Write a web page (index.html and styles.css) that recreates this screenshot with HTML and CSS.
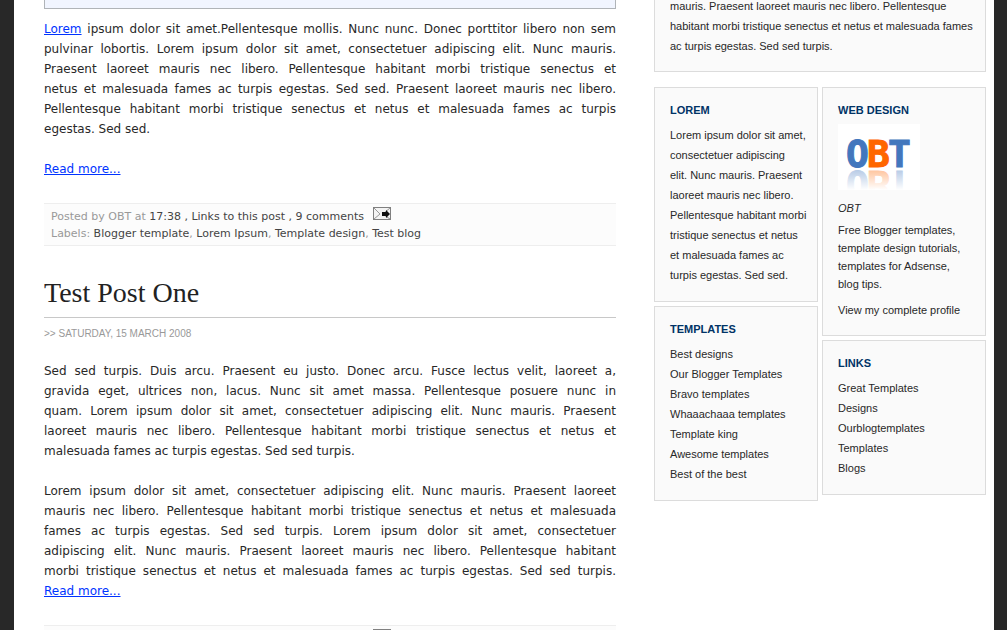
FILE: index.html
```html
<!DOCTYPE html>
<html lang="en">
<head>
    <title>Test blog</title>
    <meta http-equiv="content-type" content="text/html; charset=UTF-8">
    <meta name="viewport" content="width=device-width, initial-scale=1">
    <link rel="stylesheet" href="styles.css">
</head>
<body>
    <!-- envelope icon shared by the post footers -->
    <svg class="defs" width="0" height="0">
        <symbol id="mail" viewBox="0 0 18 13">
            <rect x="0.5" y="0.5" width="17" height="12" fill="#f4f4f4" stroke="#808080" />
            <path d="M1 1l6 6-6 5M17 1l-6 5M11 8l6 4" fill="none" stroke="#999" />
            <path d="M9 5h4V3l4 4-4 4V9H9z" fill="#111" />
        </symbol>
    </svg>

    <div id="outer-wrapper">
        <div id="main">
            <div class="post">
                <div class="notice"></div>
                <div class="post-body">
                    <p>
                        <a href="#">Lorem</a> ipsum dolor sit amet.Pellentesque mollis. Nunc nunc. Donec porttitor libero non sem<br>
                        pulvinar lobortis. Lorem ipsum dolor sit amet, consectetuer adipiscing elit. Nunc mauris.<br>
                        Praesent laoreet mauris nec libero. Pellentesque habitant morbi tristique senectus et<br>
                        netus et malesuada fames ac turpis egestas. Sed sed. Praesent laoreet mauris nec libero.<br>
                        Pellentesque habitant morbi tristique senectus et netus et malesuada fames ac turpis
                        <span class="last">egestas. Sed sed.</span>
                    </p>
                    <p><span class="last"><a href="#">Read more...</a></span></p>
                </div>
                <div class="post-footer">
                    <div>Posted by OBT at <a href="#">17:38</a> <a href="#">, Links to this post</a> <a href="#">, 9 comments</a> <a class="mail" href="#" aria-label="Email Post"><svg width="18" height="13"><use href="#mail" /></svg></a></div>
                    <div>Labels: <a href="#">Blogger template</a>, <a href="#">Lorem Ipsum</a>, <a href="#">Template design</a>, <a href="#">Test blog</a></div>
                </div>
            </div>

            <div class="post">
                <h3 class="post-title">Test Post One</h3>
                <h2 class="date-header">&gt;&gt; Saturday, 15 March 2008</h2>
                <div class="post-body">
                    <p>
                        Sed sed turpis. Duis arcu. Praesent eu justo. Donec arcu. Fusce lectus velit, laoreet a,<br>
                        gravida eget, ultrices non, lacus. Nunc sit amet massa. Pellentesque posuere nunc in<br>
                        quam. Lorem ipsum dolor sit amet, consectetuer adipiscing elit. Nunc mauris. Praesent<br>
                        laoreet mauris nec libero. Pellentesque habitant morbi tristique senectus et netus et
                        <span class="last">malesuada fames ac turpis egestas. Sed sed turpis.</span>
                    </p>
                    <p>
                        Lorem ipsum dolor sit amet, consectetuer adipiscing elit. Nunc mauris. Praesent laoreet<br>
                        mauris nec libero. Pellentesque habitant morbi tristique senectus et netus et malesuada<br>
                        fames ac turpis egestas. Sed sed turpis. Lorem ipsum dolor sit amet, consectetuer<br>
                        adipiscing elit. Nunc mauris. Praesent laoreet mauris nec libero. Pellentesque habitant<br>
                        morbi tristique senectus et netus et malesuada fames ac turpis egestas. Sed sed turpis.
                        <span class="last"><a href="#">Read more...</a></span>
                    </p>
                </div>
                <div class="post-footer">
                    <div>Posted by OBT at <a href="#">17:38</a> <a href="#">, Links to this post</a> <a href="#">, 9 comments</a> <a class="mail" href="#" aria-label="Email Post"><svg width="18" height="13"><use href="#mail" /></svg></a></div>
                </div>
            </div>
        </div>

        <div id="sidebar">
            <div class="widget top">
                <p>mauris. Praesent laoreet mauris nec libero. Pellentesque<br>habitant morbi tristique senectus et netus et malesuada fames<br>ac turpis egestas. Sed sed turpis.</p>
            </div>
            <div class="columns">
                <div class="column">
                    <div class="widget">
                        <h2>Lorem</h2>
                        <p>
                            Lorem ipsum dolor sit amet,<br>
                            consectetuer adipiscing<br>
                            elit. Nunc mauris. Praesent<br>
                            laoreet mauris nec libero.<br>
                            Pellentesque habitant morbi<br>
                            tristique senectus et netus<br>
                            et malesuada fames ac<br>
                            turpis egestas. Sed sed.
                        </p>
                    </div>
                    <div class="widget">
                        <h2>Templates</h2>
                        <ul>
                            <li><a href="#">Best designs</a></li>
                            <li><a href="#">Our Blogger Templates</a></li>
                            <li><a href="#">Bravo templates</a></li>
                            <li><a href="#">Whaaachaaa templates</a></li>
                            <li><a href="#">Template king</a></li>
                            <li><a href="#">Awesome templates</a></li>
                            <li><a href="#">Best of the best</a></li>
                        </ul>
                    </div>
                </div>
                <div class="column">
                    <div class="widget profile">
                        <h2>Web design</h2>
                        <svg class="logo" width="82" height="66" viewBox="0 0 82 66">
                            <defs>
                                <linearGradient id="fade" x1="0" y1="0" x2="0" y2="1">
                                    <stop offset="0" stop-color="#fff" stop-opacity="0.6" />
                                    <stop offset="1" stop-color="#fff" />
                                </linearGradient>
                                <g id="obt">
                                    <text class="blue" x="8" y="43">O</text>
                                    <text class="blue" x="50" y="43">T</text>
                                    <text class="orange" x="29" y="43">B</text>
                                </g>
                            </defs>
                            <rect width="82" height="66" fill="#fff" />
                            <use href="#obt" />
                            <use href="#obt" transform="translate(0 90) scale(1 -1)" />
                            <rect y="45" width="82" height="21" fill="url(#fade)" />
                        </svg>
                        <div class="profile-name">OBT</div>
                        <p>
                            Free Blogger templates,<br>
                            template design tutorials,<br>
                            templates for Adsense,<br>
                            blog tips.
                        </p>
                        <a href="#">View my complete profile</a>
                    </div>
                    <div class="widget">
                        <h2>Links</h2>
                        <ul>
                            <li><a href="#">Great Templates</a></li>
                            <li><a href="#">Designs</a></li>
                            <li><a href="#">Ourblogtemplates</a></li>
                            <li><a href="#">Templates</a></li>
                            <li><a href="#">Blogs</a></li>
                        </ul>
                    </div>
                </div>
            </div>
        </div>
    </div>
</body>
</html>
```
FILE: styles.css
```css
html {
    height: 100%;
}

body {
    margin: 0;
    height: 100%;
    overflow: hidden;
    background: #282828;
    color: #282828;
    font: 12px/20px Verdana, 'DejaVu Sans', sans-serif;
}

.defs {
    position: absolute;
}

h2, h3, p, ul {
    margin: 0;
    padding: 0;
}

#outer-wrapper {
    display: flex;
    gap: 38px;
    min-height: 100%;
    box-sizing: border-box;
    margin: 0 13px 0 14px;
    padding: 0 8px 0 30px;
    background: #fff;
}

/* posts */
#main {
    flex: 1;
    min-width: 0;
}

.notice {
    height: 8px;
    margin-bottom: 10px;
    border: 1px solid #b0b4b8;
    border-top: none;
    background: #f1f5ff;
}

.post-body {
    text-align: justify;
    text-align-last: justify;
}

    .post-body p {
        margin-bottom: 20px;
    }

    .post-body a {
        color: #0033ff;
    }

    .post-body .last {
        display: block;
        text-align-last: left;
    }

.post-footer {
    margin: 24px 0 31px;
    padding: 3px 7px;
    border-top: 1px solid #eee;
    border-bottom: 1px solid #eee;
    background: #fcfcfc;
    color: #999;
    font-size: 11px;
    line-height: 17px;
}

    .post-footer a {
        color: #444;
        text-decoration: none;
    }

    .post-footer .mail {
        margin-left: 5px;
    }

    .post-footer svg {
        display: inline-block;
        vertical-align: baseline;
    }

.post-title {
    padding-bottom: 8px;
    border-bottom: 1px solid #c8c8c8;
    color: #222;
    font: 28px/32px Georgia, 'Liberation Serif', serif;
}

.date-header {
    margin: 6px 0 17px;
    color: #999;
    font: 10px/20px Arial, 'Liberation Sans', sans-serif;
    text-transform: uppercase;
}

/* sidebar */
#sidebar {
    width: 332px;
    font: 11px/20px Arial, 'Liberation Sans', sans-serif;
}

.columns {
    display: flex;
    gap: 4px;
}

.column {
    flex: 1;
    min-width: 0;
}

.widget {
    margin-bottom: 4px;
    padding: 12px 10px 16px 15px;
    border: 1px solid #dcdcdc;
    background: #fafafa;
}

    .widget.top {
        margin: -4px 0 15px;
        padding-top: 0;
        padding-bottom: 15px;
        border-top: none;
    }

    .widget h2 {
        margin-bottom: 5px;
        color: #003366;
        font-size: 11px;
        line-height: 20px;
        text-transform: uppercase;
    }

    .widget ul {
        list-style: none;
    }

    .widget a {
        color: #282828;
        text-decoration: none;
    }

.profile {
    line-height: 18px;
}

    .profile h2 {
        margin-bottom: 4px;
    }

    .profile p {
        margin-bottom: 8px;
    }

.profile-name {
    margin: 9px 0 4px;
    font-style: italic;
}

.logo {
    display: block;
    font: bold 38px 'DejaVu Sans Mono', monospace;
}

    .logo .blue {
        fill: #4277bd;
        stroke: #4277bd;
    }

    .logo .orange {
        fill: #ff6600;
        stroke: #ff6600;
    }
```
